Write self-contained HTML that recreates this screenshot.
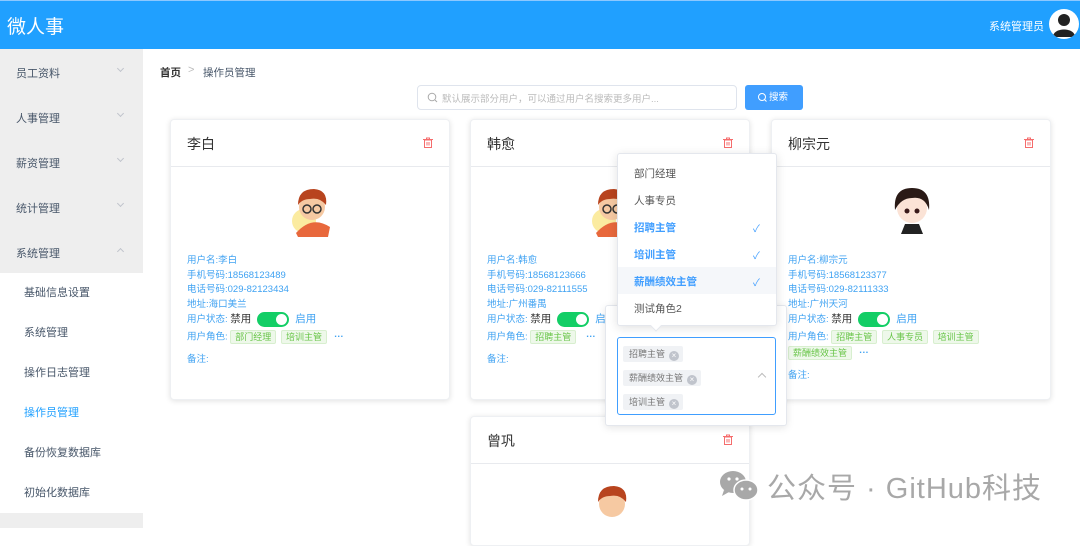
<!DOCTYPE html>
<html><head><meta charset="utf-8"><style>
*{margin:0;padding:0;box-sizing:border-box}
body{width:1080px;height:528px;overflow:hidden;background:#fff;font-family:"Liberation Sans","Noto Sans CJK SC",sans-serif;position:relative;color:#333}
.a{position:absolute}
.hdr{left:0;top:0;width:1080px;height:49px;background:#20a0ff;border-top:1px solid #8cc8ff}
.side{left:0;top:49px;width:143px;height:479px;background:#eeeeee}
.mi{position:absolute;left:16px;font-size:11px;color:#48576a}
.chev{position:absolute;left:118px;width:5px;height:5px;border-right:1px solid #c0c4cc;border-bottom:1px solid #c0c4cc;transform:rotate(45deg)}
.sub{position:absolute;left:0;width:143px;height:40px;background:#fff;font-size:11px;color:#48576a;padding-left:24px;line-height:40px}
.card{position:absolute;width:280px;background:#fff;border:1px solid #eef0f3;border-radius:4px;box-shadow:0 1px 6px rgba(0,0,0,.12)}
.ct{position:absolute;left:16px;top:14px;font-size:14px;color:#333}
.hl{position:absolute;left:0;top:46px;width:100%;height:1px;background:#e8eaee}
.tr{position:absolute;right:16px;top:17px;width:10px;height:11px}
.info{position:absolute;left:16px;font-size:9.5px;color:#3fa2f2;line-height:14.5px;white-space:nowrap}
.tag{display:inline-block;height:14px;line-height:13px;padding:0 4px;border:1px solid #d8efcf;background:#eef8ea;color:#68c548;font-size:9px;border-radius:2px;margin-right:2px;vertical-align:middle}
.sw{display:inline-block;width:32px;height:15px;background:#13ce66;border-radius:8px;position:relative;vertical-align:middle;margin:0 6px 0 6px}
.sw:after{content:"";position:absolute;right:2px;top:2px;width:11px;height:11px;border-radius:50%;background:#fff}
.dd{position:absolute;font-size:10.5px;left:16px}
.st{display:inline-block;height:16px;line-height:16px;padding:0 4px 0 6px;background:#f0f2f5;color:#777;font-size:9px;border-radius:2px}
.st i{display:inline-block;width:10px;height:10px;border-radius:50%;background:#c0c4cc;color:#fff;font-style:normal;font-size:8px;line-height:10px;text-align:center;margin-left:4px;vertical-align:-1px}
</style></head><body>
<div class="a hdr"></div>
<div class="a" style="left:7px;top:12px;font-size:19px;color:#fff">微人事</div>
<div class="a" style="left:989px;top:18px;font-size:11px;color:#fff">系统管理员</div>
<div class="a" style="left:1049px;top:9px;width:30px;height:30px;border-radius:50%;background:#fff;overflow:hidden">
<svg width="30" height="30" viewBox="0 0 30 30"><circle cx="15" cy="11" r="6" fill="#222"/><path d="M4 28 C4 18 26 18 26 28 Z" fill="#222"/></svg></div>

<div class="a side">
<div class="mi" style="top:16px">员工资料</div><div class="chev" style="top:17px"></div>
<div class="mi" style="top:61px">人事管理</div><div class="chev" style="top:62px"></div>
<div class="mi" style="top:106px">薪资管理</div><div class="chev" style="top:107px"></div>
<div class="mi" style="top:151px">统计管理</div><div class="chev" style="top:152px"></div>
<div class="mi" style="top:196px">系统管理</div><div class="chev" style="top:200px;transform:rotate(225deg)"></div>
<div class="sub" style="top:224px">基础信息设置</div>
<div class="sub" style="top:264px">系统管理</div>
<div class="sub" style="top:304px">操作日志管理</div>
<div class="sub" style="top:344px;color:#20a0ff">操作员管理</div>
<div class="sub" style="top:384px">备份恢复数据库</div>
<div class="sub" style="top:424px">初始化数据库</div>
</div>

<div class="a" style="left:160px;top:65px;font-size:10.5px;color:#333;font-weight:bold">首页</div>
<div class="a" style="left:188px;top:64px;font-size:11px;color:#bbb">&gt;</div>
<div class="a" style="left:203px;top:65px;font-size:10.5px;color:#48576a">操作员管理</div>

<div class="a" style="left:417px;top:85px;width:320px;height:25px;border:1px solid #dfe4ed;border-radius:4px"></div>
<svg class="a" style="left:427px;top:92px" width="11" height="11" viewBox="0 0 11 11"><circle cx="5" cy="5" r="3.8" fill="none" stroke="#aaa" stroke-width="1"/><path d="M8 8 L10 10" stroke="#aaa"/></svg>
<div class="a" style="left:442px;top:91px;font-size:9.5px;color:#bbb">默认展示部分用户，可以通过用户名搜索更多用户...</div>
<div class="a" style="left:745px;top:85px;width:58px;height:25px;background:#409eff;border-radius:3px;color:#fff;font-size:9.5px;line-height:25px;padding-left:24px">搜索</div>
<svg class="a" style="left:757px;top:92px" width="11" height="11" viewBox="0 0 11 11"><circle cx="5" cy="5" r="3.5" fill="none" stroke="#fff" stroke-width="1"/><path d="M7.6 7.6 L9.5 9.5" stroke="#fff"/></svg>

<div class="card" style="left:170px;top:119px;height:281px">
<div class="ct">李白</div><div class="hl"></div>
<svg class="tr" viewBox="0 0 10 11"><rect x="1.5" y="3" width="7" height="7.5" fill="none" stroke="#f56c6c"/><path d="M0 2.5H10M3.5 2.5V1H6.5V2.5M4 5V8.5M6 5V8.5" stroke="#f56c6c" fill="none"/></svg>
<svg class="a" style="left:113px;top:61px" width="56" height="56" viewBox="0 0 56 56"><circle cx="28" cy="28" r="27" fill="#fff"/><circle cx="20" cy="40" r="12" fill="#fbeba0"/><path d="M12 52 Q28 34 46 46 L44 56 L14 56Z" fill="#e8683c"/><circle cx="28" cy="26" r="13" fill="#f6c9a2"/><path d="M14 24 Q14 8 30 8 Q44 9 42 24 Q36 16 26 18 Q18 18 14 24Z" fill="#b8441e"/><circle cx="23" cy="28" r="4" fill="none" stroke="#333" stroke-width="1.5"/><circle cx="33" cy="28" r="4" fill="none" stroke="#333" stroke-width="1.5"/></svg>
<div class="info" style="top:134px">用户名:李白<br>手机号码:18568123489<br>电话号码:029-82123434<br>地址:海口美兰</div>
<div class="info" style="top:192px">用户状态: <span style="color:#333;font-size:10.5px">禁用</span><span class="sw"></span><span style="font-size:10.5px">启用</span></div>
<div class="info" style="top:210px">用户角色: <span class="tag">部门经理</span> <span class="tag">培训主管</span> &nbsp;<b>···</b></div>
<div class="info" style="top:233px">备注:</div>
</div>

<div class="card" style="left:470px;top:119px;height:281px">
<div class="ct">韩愈</div><div class="hl"></div>
<svg class="tr" viewBox="0 0 10 11"><rect x="1.5" y="3" width="7" height="7.5" fill="none" stroke="#f56c6c"/><path d="M0 2.5H10M3.5 2.5V1H6.5V2.5M4 5V8.5M6 5V8.5" stroke="#f56c6c" fill="none"/></svg>
<svg class="a" style="left:113px;top:61px" width="56" height="56" viewBox="0 0 56 56"><circle cx="20" cy="40" r="12" fill="#fbeba0"/><path d="M12 52 Q28 34 46 46 L44 56 L14 56Z" fill="#e8683c"/><circle cx="28" cy="26" r="13" fill="#f6c9a2"/><path d="M14 24 Q14 8 30 8 Q44 9 42 24 Q36 16 26 18 Q18 18 14 24Z" fill="#b8441e"/><circle cx="23" cy="28" r="4" fill="none" stroke="#333" stroke-width="1.5"/><circle cx="33" cy="28" r="4" fill="none" stroke="#333" stroke-width="1.5"/></svg>
<div class="info" style="top:134px">用户名:韩愈<br>手机号码:18568123666<br>电话号码:029-82111555<br>地址:广州番禺</div>
<div class="info" style="top:192px">用户状态: <span style="color:#333;font-size:10.5px">禁用</span><span class="sw"></span><span style="font-size:10.5px">启用</span></div>
<div class="info" style="top:210px">用户角色: <span class="tag">招聘主管</span> &nbsp;&nbsp;<b>···</b></div>
<div class="info" style="top:233px">备注:</div>
</div>

<div class="card" style="left:771px;top:119px;height:281px">
<div class="ct">柳宗元</div><div class="hl"></div>
<svg class="tr" viewBox="0 0 10 11"><rect x="1.5" y="3" width="7" height="7.5" fill="none" stroke="#f56c6c"/><path d="M0 2.5H10M3.5 2.5V1H6.5V2.5M4 5V8.5M6 5V8.5" stroke="#f56c6c" fill="none"/></svg>
<svg class="a" style="left:117px;top:62px" width="46" height="56" viewBox="0 0 46 56"><path d="M16 42 L30 42 L34 52 L12 52Z" fill="#222"/><circle cx="23" cy="26" r="15" fill="#fbe3d6"/><path d="M6 28 Q4 6 23 6 Q42 6 40 28 Q36 14 23 16 Q12 16 6 28Z" fill="#2a1a16"/><circle cx="18" cy="29" r="2.5" fill="#3a1a1a"/><circle cx="28" cy="29" r="2.5" fill="#3a1a1a"/></svg>
<div class="info" style="top:134px">用户名:柳宗元<br>手机号码:18568123377<br>电话号码:029-82111333<br>地址:广州天河</div>
<div class="info" style="top:192px">用户状态: <span style="color:#333;font-size:10.5px">禁用</span><span class="sw"></span><span style="font-size:10.5px">启用</span></div>
<div class="info" style="top:210px">用户角色: <span class="tag">招聘主管</span> <span class="tag">人事专员</span> <span class="tag">培训主管</span></div>
<div class="info" style="top:226px"><span class="tag">薪酬绩效主管</span> &nbsp;<b>···</b></div>
<div class="info" style="top:249px">备注:</div>
</div>

<div class="card" style="left:470px;top:416px;height:130px">
<div class="ct">曾巩</div><div class="hl"></div>
<svg class="tr" viewBox="0 0 10 11"><rect x="1.5" y="3" width="7" height="7.5" fill="none" stroke="#f56c6c"/><path d="M0 2.5H10M3.5 2.5V1H6.5V2.5M4 5V8.5M6 5V8.5" stroke="#f56c6c" fill="none"/></svg>
<svg class="a" style="left:113px;top:61px" width="56" height="56" viewBox="0 0 56 56"><circle cx="28" cy="26" r="13" fill="#f6c9a2"/><path d="M14 24 Q14 8 30 8 Q44 9 42 24 Q36 16 26 18 Q18 18 14 24Z" fill="#b8441e"/></svg>
</div>

<div class="a" style="left:605px;top:305px;width:182px;height:121px;background:#fff;border:1px solid #e4e7ed;border-radius:3px;box-shadow:0 2px 8px rgba(0,0,0,.1)"></div>
<div class="a" style="left:617px;top:337px;width:159px;height:78px;border:1px solid #409eff;border-radius:3px;background:#fff"></div>
<div class="a" style="left:623px;top:344px"><span class="st">招聘主管<i>×</i></span></div>
<div class="a" style="left:623px;top:368px"><span class="st">薪酬绩效主管<i>×</i></span></div>
<div class="a" style="left:623px;top:392px"><span class="st">培训主管<i>×</i></span></div>
<div class="a" style="left:759px;top:374px;width:6px;height:6px;border-left:1px solid #bbb;border-top:1px solid #bbb;transform:rotate(45deg)"></div>

<div class="a" style="left:617px;top:153px;width:160px;height:173px;background:#fff;border:1px solid #e4e7ed;border-radius:3px;box-shadow:0 2px 10px rgba(0,0,0,.12)">
<div class="a" style="left:0;top:113px;width:158px;height:27px;background:#f5f7fa"></div>
<div class="dd" style="top:12px;color:#555">部门经理</div>
<div class="dd" style="top:39px;color:#555">人事专员</div>
<div class="dd" style="top:66px;color:#409eff;font-weight:bold">招聘主管</div>
<div class="dd" style="top:93px;color:#409eff;font-weight:bold">培训主管</div>
<div class="dd" style="top:120px;color:#409eff;font-weight:bold">薪酬绩效主管</div>
<div class="dd" style="top:147px;color:#555">测试角色2</div>
<div class="a" style="left:135px;top:66px;color:#409eff;font-size:10px">✓</div>
<div class="a" style="left:135px;top:93px;color:#409eff;font-size:10px">✓</div>
<div class="a" style="left:135px;top:120px;color:#409eff;font-size:10px">✓</div>
</div>
<div class="a" style="left:652px;top:322px;width:8px;height:8px;background:#fff;transform:rotate(45deg);border-right:1px solid #e4e7ed;border-bottom:1px solid #e4e7ed"></div>

<svg class="a" style="left:718px;top:470px" width="42" height="32" viewBox="0 0 42 32"><ellipse cx="15" cy="12" rx="13" ry="11" fill="#a8a8a8"/><path d="M6 20 L4 26 L11 22Z" fill="#a8a8a8"/><ellipse cx="28" cy="20" rx="12" ry="10" fill="#a8a8a8" stroke="#fff" stroke-width="1.5"/><circle cx="11" cy="9" r="1.6" fill="#fff"/><circle cx="19" cy="9" r="1.6" fill="#fff"/><circle cx="24" cy="19" r="1.5" fill="#fff"/><circle cx="32" cy="19" r="1.5" fill="#fff"/></svg>
<div class="a" style="left:767px;top:465px;font-size:29px;letter-spacing:1px;color:#a8a8a8;white-space:nowrap">公众号 · GitHub科技</div>
</body></html>
